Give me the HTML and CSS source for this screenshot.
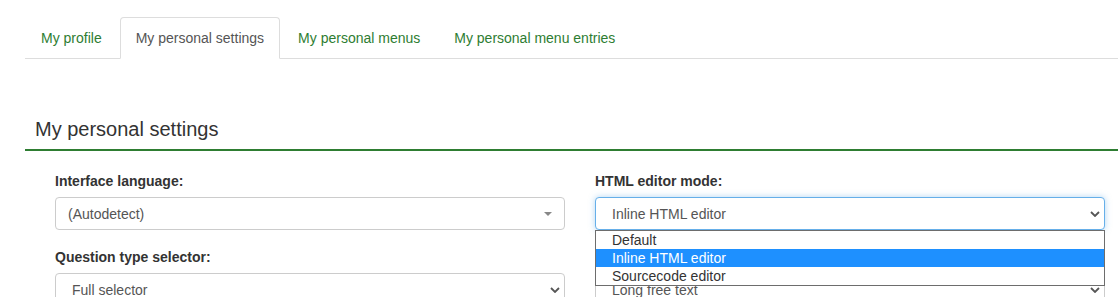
FILE: index.html
```html
<!DOCTYPE html>
<html lang="en">
<head>
    <meta charset="UTF-8">
    <title>My personal settings</title>
    <link rel="stylesheet" href="styles.css">
</head>
<body>
    <div class="page">
        <ul class="tabs">
            <li><a href="#">My profile</a></li>
            <li class="active"><a href="#">My personal settings</a></li>
            <li><a href="#">My personal menus</a></li>
            <li><a href="#">My personal menu entries</a></li>
        </ul>

        <h3 class="panel-title">My personal settings</h3>

        <div class="fields">
            <div class="form-group">
                <label>Interface language:</label>
                <div class="select">
                    <span>(Autodetect)</span>
                    <svg class="caret" width="8" height="4" viewBox="0 0 8 4"><polygon points="0,0 8,0 4,4" fill="#888"/></svg>
                </div>
            </div>

            <div class="form-group">
                <label>HTML editor mode:</label>
                <div class="select native focus">
                    <span>Inline HTML editor</span>
                    <svg class="chevron" width="10" height="6" viewBox="0 0 10 6"><polyline points="1,1 5,5 9,1" fill="none" stroke="#555" stroke-width="1.8"/></svg>
                    <ul class="dropdown">
                        <li>Default</li>
                        <li class="selected">Inline HTML editor</li>
                        <li>Sourcecode editor</li>
                    </ul>
                </div>
            </div>

            <div class="form-group">
                <label>Question type selector:</label>
                <div class="select native">
                    <span>Full selector</span>
                    <svg class="chevron" width="10" height="6" viewBox="0 0 10 6"><polyline points="1,1 5,5 9,1" fill="none" stroke="#555" stroke-width="1.8"/></svg>
                </div>
            </div>

            <div class="form-group">
                <label>&nbsp;</label>
                <div class="select native">
                    <span>Long free text</span>
                    <svg class="chevron" width="10" height="6" viewBox="0 0 10 6"><polyline points="1,1 5,5 9,1" fill="none" stroke="#555" stroke-width="1.8"/></svg>
                </div>
            </div>
        </div>
    </div>
</body>
</html>
```

FILE: styles.css
```css
body {
    margin: 0;
    font-family: 'Liberation Sans', Arial, sans-serif;
    font-size: 14px;
    line-height: 20px;
    color: #333;
    background: #fff;
    overflow: hidden;
}
.page {
    padding: 17px 0 0 25px;
}
.tabs {
    display: flex;
    list-style: none;
    margin: 0;
    padding: 0;
    border-bottom: 1px solid #ddd;
}
.tabs li {
    margin-bottom: -1px;
    margin-right: 2px;
}
.tabs a {
    display: block;
    padding: 10px 15px;
    border: 1px solid transparent;
    border-radius: 4px 4px 0 0;
    color: #2e7d32;
    text-decoration: none;
}
.tabs .active a {
    color: #555;
    background: #fff;
    border-color: #ddd #ddd transparent;
}
.panel-title {
    margin: 59px 0 0;
    padding: 0 0 9px 10px;
    font-size: 20px;
    line-height: 22px;
    font-weight: normal;
    color: #333;
    border-bottom: 2px solid #2e7d32;
}
.fields {
    display: grid;
    grid-template-columns: 510px 510px;
    column-gap: 30px;
    padding: 20px 0 0 30px;
}
.form-group {
    margin-bottom: 17px;
}
.form-group label {
    display: block;
    font-weight: bold;
    margin-bottom: 6px;
}
.select {
    position: relative;
    display: flex;
    align-items: center;
    justify-content: space-between;
    height: 33px;
    box-sizing: border-box;
    padding: 0 12px;
    border: 1px solid #ccc;
    border-radius: 4px;
    color: #555;
    background: #fff;
}
.select.native {
    padding: 0 4px 0 16px;
}
.select.focus {
    border-color: #66afe9;
    box-shadow: 0 0 6px rgba(102, 175, 233, 0.5);
}
.dropdown {
    position: absolute;
    top: 32px;
    left: -1px;
    width: 510px;
    box-sizing: border-box;
    margin: 0;
    padding: 0;
    list-style: none;
    background: #fff;
    border: 1px solid #6d6d6d;
    z-index: 5;
}
.dropdown li {
    height: 18px;
    line-height: 18px;
    padding-left: 16px;
    color: #333;
}
.dropdown .selected {
    background: #1e90ff;
    color: #fff;
}
```
